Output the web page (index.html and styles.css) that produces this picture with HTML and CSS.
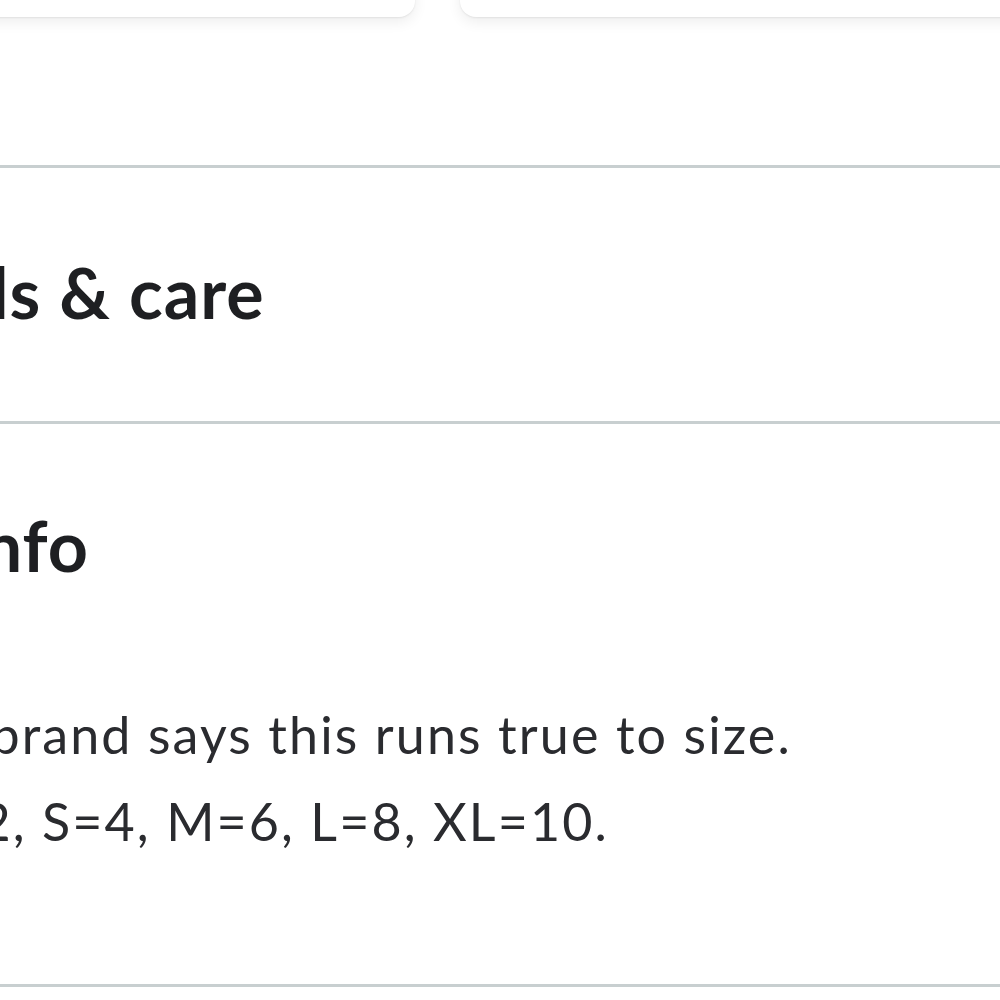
FILE: index.html
```html
<!DOCTYPE html>
<html lang="en">
<head>
<meta charset="utf-8">
<title>Product details</title>
<link rel="stylesheet" href="styles.css">
</head>
<body>
<main class="page">
  <div class="cards">
    <div class="card card-left"></div>
    <div class="card card-right"></div>
  </div>
  <section class="section section-care">
    <h2 class="section-title">Details &amp; care</h2>
  </section>
  <section class="section section-size">
    <h2 class="section-title">Size info</h2>
    <p class="section-body">The brand says this runs true to size.<br>XS=2, S=4, M=6, L=8, XL=10.</p>
  </section>
  <div class="section section-end"></div>
</main>
</body>
</html>
```
FILE: styles.css
```css
html, body {
  margin: 0;
  padding: 0;
  background: #ffffff;
  overflow: hidden;
}

body {
  font-family: Lato, "Open Sans", sans-serif;
  color: #1f2023;
}

.page {
  margin-left: -183px;
  width: 1400px;
}

.cards {
  display: flex;
  gap: 45px;
  margin-top: -183px;
  height: 200px;
  margin-bottom: 148px;
}

.card {
  background: #ffffff;
  border-radius: 16px;
  box-shadow: 0 1px 2px rgba(0, 0, 0, 0.07), 0 5px 14px rgba(0, 0, 0, 0.07);
}

.card-left {
  width: 598px;
}

.card-right {
  flex: 1;
}

.section {
  border-top: 3px solid #c8cfd0;
}

.section-title {
  margin: 0;
  font-size: 70px;
  line-height: 70px;
  font-weight: 700;
  letter-spacing: 1px;
  color: #1e1f22;
}

.section-care {
  padding-top: 89px;
  padding-bottom: 94px;
}

.section-size {
  padding-top: 86px;
  padding-bottom: 119px;
}

.section-body {
  margin: 111px 0 0;
  padding-left: 65px;
  font-size: 52px;
  line-height: 87px;
  font-weight: 400;
  letter-spacing: 2.1px;
  color: #2a2b2f;
}

.section-end {
  height: 40px;
}
```
